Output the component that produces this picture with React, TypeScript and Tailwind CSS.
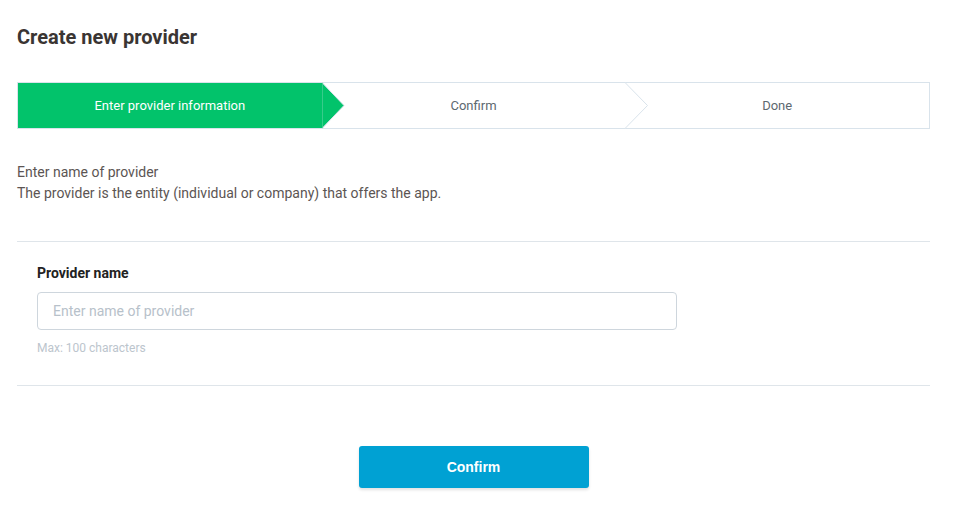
import React from "react";

const steps = ["Enter provider information", "Confirm", "Done"];

export default function App() {
  return (
    <div className="min-h-[513px] w-full bg-white px-[17px] pr-[28px] font-['Roboto',sans-serif]">
      <h1 className="pt-[23px] text-[20px] font-bold leading-[28px] text-[#3a3533]">Create new provider</h1>

      <div className="relative mt-[31px] flex h-[47px] border border-[#d9e3eb]">
        {steps.map((s, i) => (
          <div
            key={s}
            className={
              i === 0
                ? "relative flex flex-1 items-center justify-center bg-[#02c36b] pt-[1px] text-[13px] text-white"
                : "relative flex flex-1 items-center justify-center bg-white pt-[1px] text-[13px] text-[#5d6870]"
            }
          >
            <span>{s}</span>
            {i === 0 && (
              <svg className="absolute left-full top-[-1px] z-10" width="23" height="47" viewBox="0 0 23 47">
                <polygon points="0,0.5 22,23.5 0,46.5" fill="#02c36b" stroke="#d9e3eb" strokeWidth="1" />
                <rect x="-1" y="1" width="1.5" height="45" fill="#02c36b" />
              </svg>
            )}
            {i === 1 && (
              <svg className="absolute left-full top-[-1px] z-10" width="24" height="47" viewBox="0 0 24 47">
                <polyline points="0,0.5 22.5,23.5 0,46.5" fill="#ffffff" stroke="#d9e3eb" strokeWidth="1" />
              </svg>
            )}
          </div>
        ))}
      </div>

      <div className="mt-[33px] text-[14px] leading-[21px] text-[#5c5553]">
        <p>Enter name of provider</p>
        <p>The provider is the entity (individual or company) that offers the app.</p>
      </div>

      <div className="mt-[37px] border-t border-[#dfe5ea]" />

      <div className="px-[20px]">
        <label className="mt-[21px] block text-[14px] font-bold leading-[20px] text-[#222]">Provider name</label>
        <input
          className="mt-[9px] block h-[38px] w-[640px] rounded-[4px] border border-[#ced6dd] px-[15px] text-[14px] text-[#333] outline-none placeholder:text-[#b7c1ca]"
          placeholder="Enter name of provider"
        />
        <p className="mt-[10px] text-[12px] leading-[16px] text-[#bcc5cd]">Max: 100 characters</p>
      </div>

      <div className="mt-[29px] border-t border-[#dfe5ea]" />

      <div className="mt-[60px] flex justify-center">
        <button className="h-[42px] w-[230px] rounded-[3px] bg-[#00a1d3] font-['Liberation_Sans',sans-serif] text-[14px] font-bold text-white shadow-[0_2px_3px_rgba(0,0,0,0.12)]">
          Confirm
        </button>
      </div>
    </div>
  );
}
